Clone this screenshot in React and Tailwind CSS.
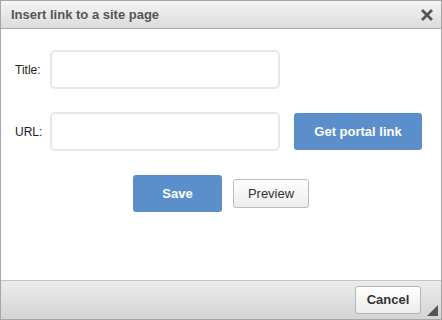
export default function App() {
  return (
    <div className="flex h-[320px] w-[442px] flex-col border border-[#a6a6a6] bg-white font-['Liberation_Sans',Arial,sans-serif]">

      {/* TITLE BAR */}
      <div className="flex h-[28px] shrink-0 items-center justify-between border-b border-[#a8a8a8] bg-gradient-to-b from-[#f4f4f4] to-[#dcdcdc] pl-[10px] pr-[8px]">
        <h1 className="text-[13px] font-bold text-[#555]">Insert link to a site page</h1>
        <svg width="12" height="12" viewBox="0 0 12 12" className="mt-[1px]">
          <path d="M2 2 L10 10 M10 2 L2 10" stroke="#555" strokeWidth="2.8" strokeLinecap="square" />
        </svg>
      </div>

      {/* BODY */}
      <div className="flex flex-1 flex-col pl-[14px] pt-[21px]">
        <div className="flex items-center">
          <label className="w-[35px] text-[12px] text-[#222]">Title:</label>
          <input className="h-[39px] w-[230px] rounded-[5px] border-2 border-[#e3e8ee] bg-white outline-none" />
        </div>

        <div className="mt-[23px] flex items-center">
          <label className="w-[35px] text-[12px] text-[#222]">URL:</label>
          <input className="h-[39px] w-[230px] rounded-[5px] border-2 border-[#e3e8ee] bg-white outline-none" />
          <button className="ml-[14px] h-[37px] w-[128px] rounded-[3px] bg-[#5a8fcc] text-[13px] font-bold text-white">
            Get portal link
          </button>
        </div>

        <div className="mt-[24px] flex items-center pl-[118px]">
          <button className="h-[37px] w-[89px] rounded-[3px] bg-[#5a8fcc] text-[13px] font-bold text-white">
            Save
          </button>
          <button className="ml-[11px] h-[29px] w-[76px] rounded-[3px] border border-[#bdbdbd] bg-gradient-to-b from-white to-[#ececec] text-[13px] text-[#333]">
            Preview
          </button>
        </div>
      </div>

      {/* FOOTER */}
      <div className="relative flex h-[39px] shrink-0 items-center justify-end border-t border-[#c4c4c4] bg-gradient-to-b from-[#ececec] to-[#d4d4d4] pr-[20px]">
        <button className="h-[28px] w-[66px] rounded-[3px] border border-[#b4b4b4] bg-gradient-to-b from-white to-[#ececec] text-[13px] font-bold text-[#333]">
          Cancel
        </button>
        <svg width="11" height="11" viewBox="0 0 11 11" className="absolute bottom-[3px] right-[3px]">
          <path d="M11 0 L11 11 L0 11 Z" fill="#555" />
        </svg>
      </div>

    </div>
  );
}
